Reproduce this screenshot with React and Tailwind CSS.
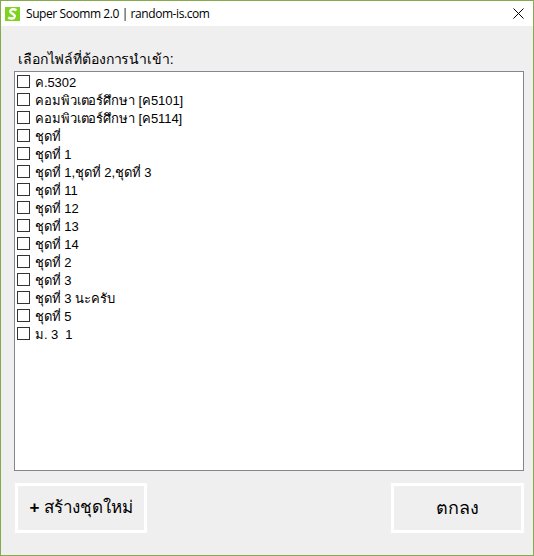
const items = ["ค.5302","คอมพิวเตอร์ศึกษา [ค5101]","คอมพิวเตอร์ศึกษา [ค5114]","ชุดที่","ชุดที่ 1","ชุดที่ 1,ชุดที่ 2,ชุดที่ 3","ชุดที่ 11","ชุดที่ 12","ชุดที่ 13","ชุดที่ 14","ชุดที่ 2","ชุดที่ 3","ชุดที่ 3 นะครับ","ชุดที่ 5","ม. 3  1"];

export default function App() {
  return (
    <div className="w-[534px] h-[556px] flex flex-col bg-[#efefef] border border-[#85a94e] overflow-hidden font-['Liberation_Sans','Noto_Sans',sans-serif] text-black">
      <div className="h-[25px] shrink-0 bg-white flex items-center pl-[4px]">
        <svg width="15" height="14" viewBox="0 0 15 14" className="shrink-0">
          <rect width="15" height="14" fill="#7ed321" />
          <path d="M11.5 3.2 C8.8 1.6 5.6 2 5.2 4.2 C4.8 6.6 10.2 6.6 9.8 9.4 C9.4 11.8 6 12.2 3.2 10.6" fill="none" stroke="#fff" strokeWidth="2.4" />
        </svg>
        <span className="ml-[6px] text-[12px] tracking-[-0.42px] font-['Open_Sans',sans-serif]">Super Soomm 2.0 | random-is.com</span>
        <svg width="11" height="11" viewBox="0 0 11 11" className="ml-auto mr-[9px] shrink-0">
          <path d="M0.5 0.5 L10.5 10.5 M10.5 0.5 L0.5 10.5" stroke="#000" strokeWidth="1" fill="none" />
        </svg>
      </div>
      <div className="flex-1 flex flex-col pl-[13px] pr-[9px] pt-[21px] pb-[22px]">
        <div className="h-[24px] leading-[24px] text-[14px] tracking-[-0.12px] pl-[4px] whitespace-pre">เลือกไฟล์ที่ต้องการนำเข้า:</div>
        <div className="h-[400px] border border-[#82878f] bg-white pt-[1px] pl-[2px] shrink-0">
          {items.map((t, i) => (
            <div key={i} className="h-[18px] flex items-start">
              <span className="mt-[2px] w-[13px] h-[13px] border border-[#333333] bg-white shrink-0" />
              <span className="ml-[5px] self-center pt-[1px] text-[13px] tracking-[-0.08px] whitespace-pre">{t}</span>
            </div>
          ))}
        </div>
        <div className="flex justify-between mt-[12px]">
          <button className="w-[132px] h-[50px] ml-[1px] border-[3px] border-white text-[17px] tracking-[-0.15px] font-bold">+ <span className="font-normal">สร้างชุดใหม่</span></button>
          <button className="w-[133px] h-[50px] pt-[1px] border-[3px] border-white text-[18px]">ตกลง</button>
        </div>
      </div>
    </div>
  );
}
